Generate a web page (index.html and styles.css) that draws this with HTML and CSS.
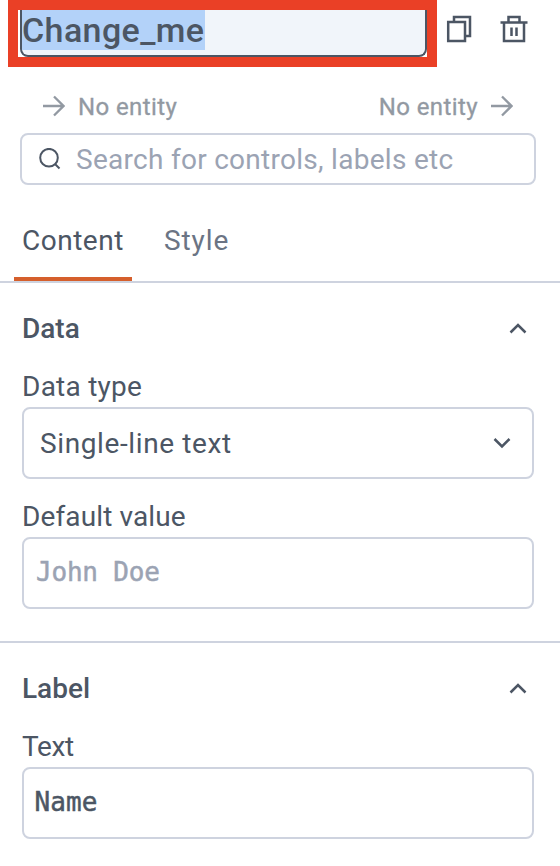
FILE: index.html
```html
<!DOCTYPE html>
<html lang="en">
<head>
<meta charset="utf-8">
<title>Property pane</title>
<link rel="stylesheet" href="styles.css">
</head>
<body>
<main class="pane">
  <header class="header">
    <div class="highlight">
      <div class="name-field"><span class="selected">Change_me</span></div>
    </div>
    <svg class="copy-icon" width="28" height="30" viewBox="0 0 28 30"><path d="M2.200 8h16.800v19h-16.800zM8 8V3h16v19h-5"/></svg>
    <svg class="trash-icon" width="28" height="30" viewBox="0 0 28 30"><path d="M.5 8.500h27M4 9v18h20V9M8.500 8V3h11v5M11.500 13.500v8.500M16.500 13.500v8.500"/></svg>
  </header>
  <div class="entities">
    <div class="entity"><svg width="22" height="22" viewBox="0 0 22 22"><path d="M0 11h20M11 1.500 20.500 11 11 20.500"/></svg><span class="entity-text">No entity</span></div>
    <div class="entity"><span class="entity-text">No entity</span><svg width="22" height="22" viewBox="0 0 22 22"><path d="M0 11h20M11 1.500 20.500 11 11 20.500"/></svg></div>
  </div>
  <div class="search">
    <svg width="22" height="22" viewBox="0 0 22 22"><circle cx="10" cy="9.700" r="8.800"/><path d="M16 16l4.500 4.500"/></svg>
    <span class="search-text">Search for controls, labels etc</span>
  </div>
  <nav class="tabs">
    <div class="tab active"><span class="content-text">Content</span></div>
    <div class="tab"><span class="style-text">Style</span></div>
  </nav>
  <section class="section">
    <div class="section-head"><h2 class="data-title">Data</h2><svg width="18" height="12" viewBox="0 0 18 12"><path d="M1.500 9.500 9 2l7.500 7.500"/></svg></div>
    <div class="label type-label">Data type</div>
    <div class="field select"><span class="select-text">Single-line text</span><svg width="18" height="12" viewBox="0 0 18 12"><path d="M1.500 2 9 9.500l7.500-7.500"/></svg></div>
    <div class="label second default-label">Default value</div>
    <div class="field code placeholder">John Doe</div>
  </section>
  <section class="section">
    <div class="section-head"><h2 class="label-title">Label</h2><svg width="18" height="12" viewBox="0 0 18 12"><path d="M1.500 9.500 9 2l7.500 7.500"/></svg></div>
    <div class="label text-label">Text</div>
    <div class="field code">Name</div>
  </section>
</main>
</body>
</html>
```
FILE: styles.css
```css
* { box-sizing: border-box; }
body {
  margin: 0;
  background: #fff;
  color: #4c5664;
  font: 400 28px/36px Roboto, "Liberation Sans", sans-serif;
}
.pane { width: 560px; height: 866px; overflow: hidden; }
svg { display: block; flex: none; fill: none; stroke: #4c5664; stroke-width: 2.5; }
span, h2, .label { white-space: nowrap; }

.header { display: flex; height: 67px; padding-left: 8px; }
.highlight { width: 429px; height: 67px; padding-left: 2px; border: 10px solid #ea4026; }
.name-field {
  height: 47px;
  border: 2px solid #4c5664;
  border-top: 0;
  border-radius: 0 0 8px 8px;
  background: #f1f5fa;
}
.selected {
  display: block;
  width: 183px;
  height: 40px;
  background: #b3d2f9;
  font-size: 34px;
  font-weight: 500;
  letter-spacing: .4px;
  line-height: 40px;
}
.copy-icon { margin: 14px 0 0 9px; }
.trash-icon { margin: 14px 0 0 26px; }

.entities {
  display: flex;
  justify-content: space-between;
  height: 66px;
  padding: 22px 47px 0 43px;
  color: #9299a2;
  font-size: 24px;
}
.entity { display: flex; align-items: center; height: 34px; gap: 13px; }
.entity-text { padding-top: 1px; letter-spacing: .4px; -webkit-text-stroke: .3px currentColor; }
.entity svg { stroke: #9299a2; stroke-width: 2.3; }

.search {
  display: flex;
  align-items: center;
  height: 52px;
  margin: 0 24px 0 20px;
  padding-left: 17px;
  gap: 15px;
  border: 2px solid #ced3df;
  border-radius: 8px;
  color: #9ba3b3;
}
.search svg { stroke-width: 2; }
.search-text { padding-top: 2px; letter-spacing: .28px; }

.tabs { display: flex; height: 98px; padding: 36px 0 0 14px; border-bottom: 2px solid #ced3df; }
.tab { height: 60px; padding: 2px 8px 0; color: #6b7484; }
.tab.active { width: 118px; margin-right: 24px; border-bottom: 4px solid #d55f2c; color: #4c5664; }
.content-text { letter-spacing: .5px; }
.style-text { letter-spacing: .9px; }

.section { height: 360px; padding: 28px 26px 0 22px; border-bottom: 2px solid #ced3df; }
.section-head { display: flex; align-items: center; justify-content: space-between; height: 36px; padding-right: 7px; }
h2 { margin: 0; font-size: 28px; font-weight: 500; }
.label { height: 36px; margin-top: 22px; }
.label.second { margin-top: 20px; }
.type-label { letter-spacing: .25px; }
.default-label { letter-spacing: .12px; }
.text-label { letter-spacing: -.4px; }
.field {
  height: 72px;
  margin-top: 2px;
  border: 2px solid #ced3df;
  border-radius: 8px;
  line-height: 68px;
}
.select { display: flex; align-items: center; justify-content: space-between; padding: 0 21px 0 16px; }
.select-text { padding-top: 2px; letter-spacing: .62px; }
.code {
  padding-left: 10.5px;
  font-family: "DejaVu Sans Mono", "Liberation Mono", monospace;
  font-size: 26px;
  letter-spacing: .1px;
  line-height: 66px;
  -webkit-text-stroke: .5px currentColor;
}
.placeholder { padding-left: 12px; letter-spacing: -.2px; color: #9ba3b3; }
```
